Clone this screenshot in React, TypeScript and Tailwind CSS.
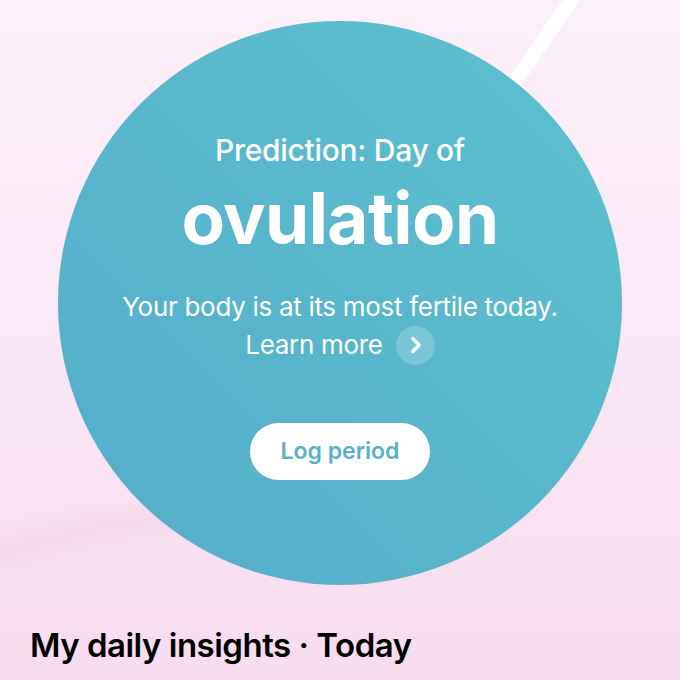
import { ChevronRight } from 'lucide-react'

export default function App() {
  return (
    <div
      className="relative w-[680px] h-[680px] overflow-hidden bg-gradient-to-b from-[#fcf0fa] via-[#fae8f6] to-[#f8dcef]"
      style={{ fontFamily: 'Inter, "Noto Sans", sans-serif' }}
    >
      {/* soft light streaks in the background */}
      <svg className="absolute inset-0" width="680" height="680" viewBox="0 0 680 680">
        <defs>
          <filter id="soft" x="-20%" y="-20%" width="140%" height="140%">
            <feGaussianBlur stdDeviation="10" />
          </filter>
        </defs>
        <line x1="578" y1="-10" x2="470" y2="148" stroke="#ffffff" strokeWidth="14" />
        <path d="M-20 560 C100 520 220 500 360 520" stroke="#f1c8e1" strokeWidth="26" fill="none" opacity="0.35" filter="url(#soft)" />
      </svg>

      <div className="relative flex flex-col">
        <div className="mx-auto mt-[21px] w-[564px] h-[564px] rounded-full bg-gradient-to-bl from-[#5cc0cf] to-[#55adc9] flex flex-col items-center text-white">
          <p className="pt-[111px] text-[30px] leading-[36px] font-medium tracking-[-0.3px]">Prediction: Day of</p>
          <h1 className="mt-[12px] text-[71px] leading-[76px] font-bold tracking-[-0.6px]">ovulation</h1>
          <p className="mt-[32px] text-[26px] leading-[38px] font-normal tracking-[-0.3px]">
            Your body is at its most fertile today.
          </p>
          <div className="flex items-center h-[38px] gap-[13px]">
            <span className="text-[26px] leading-[38px] tracking-[-0.3px]">Learn more</span>
            <span className="w-[39px] h-[39px] rounded-full bg-white/20 flex items-center justify-center">
              <ChevronRight size={26} strokeWidth={3} className="text-white ml-[1px]" />
            </span>
          </div>
          <button className="mt-[59px] w-[180px] h-[57px] rounded-full bg-white text-[#57b3c8] text-[23px] font-semibold">
            Log period
          </button>
        </div>

        <h2 className="mt-[40px] pl-[30px] text-[33px] leading-[40px] font-semibold text-black tracking-[-0.5px]">
          My daily insights · Today
        </h2>
      </div>
    </div>
  )
}
